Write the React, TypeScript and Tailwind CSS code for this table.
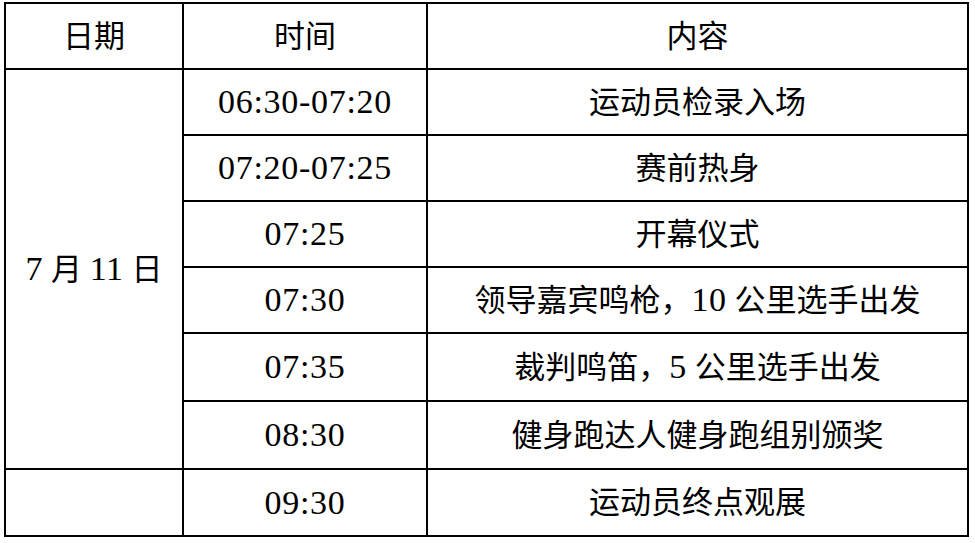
type Row = { time: string; content: string; h: string };

const rows: Row[] = [
  { time: "06:30-07:20", content: "运动员检录入场", h: "h-[66px]" },
  { time: "07:20-07:25", content: "赛前热身", h: "h-[66px]" },
  { time: "07:25", content: "开幕仪式", h: "h-[66px]" },
  { time: "07:30", content: "领导嘉宾鸣枪，10 公里选手出发", h: "h-[66px]" },
  { time: "07:35", content: "裁判鸣笛，5 公里选手出发", h: "h-[68px]" },
  { time: "08:30", content: "健身跑达人健身跑组别颁奖", h: "h-[68px]" },
];

// digits are set a little larger than the CJK text, as in the source doc
function Txt({ text }: { text: string }) {
  const parts = text.split(/([0-9:\-]+)/);
  return (
    <>
      {parts.map((p, i) =>
        /^[0-9:\-]+$/.test(p) ? (
          <span key={i} className="font-[Liberation_Serif,serif] text-[34px] tracking-[0.7px]">
            {p}
          </span>
        ) : (
          <span key={i}>{p}</span>
        )
      )}
    </>
  );
}

const cell = "border-2 border-black text-center align-middle p-0 leading-none";

export default function App() {
  return (
    <div className="bg-white w-[975px] h-[543px] pt-[2px] pl-[4px] font-[Liberation_Serif,Noto_Sans_CJK_SC,serif] text-[31px] text-black">
      <table className="border-collapse w-[965px] table-fixed">
        <colgroup>
          <col className="w-[178px]" />
          <col className="w-[244px]" />
          <col />
        </colgroup>
        <tbody>
          <tr className="h-[66px]">
            <td className={cell}>日期</td>
            <td className={cell}>时间</td>
            <td className={cell}>内容</td>
          </tr>
          {rows.map((r, i) => (
            <tr key={r.time} className={r.h}>
              {i === 0 && (
                <td className={cell} rowSpan={6}>
                  <Txt text="7 月 11 日" />
                </td>
              )}
              <td className={cell}>
                <Txt text={r.time} />
              </td>
              <td className={cell}>
                <Txt text={r.content} />
              </td>
            </tr>
          ))}
          <tr className="h-[67px]">
            <td className={cell}></td>
            <td className={cell}>
              <Txt text="09:30" />
            </td>
            <td className={cell}>
              <Txt text="运动员终点观展" />
            </td>
          </tr>
        </tbody>
      </table>
    </div>
  );
}
